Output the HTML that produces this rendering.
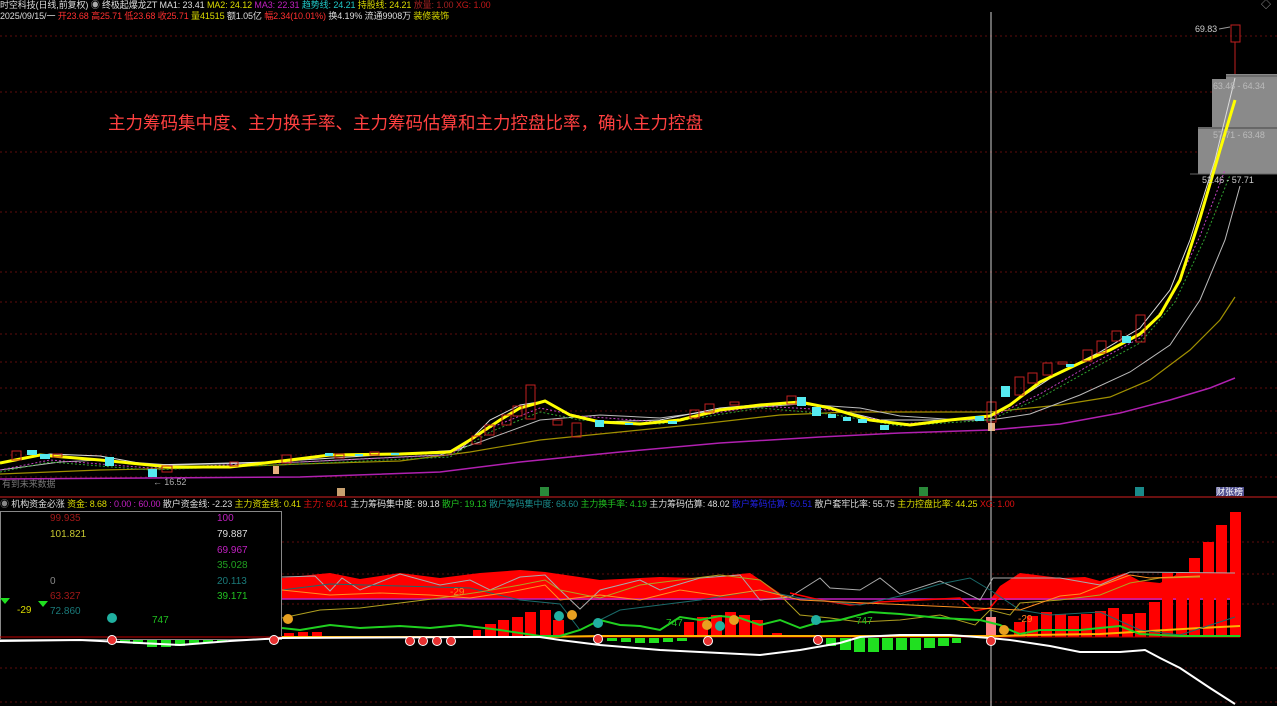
<!DOCTYPE html>
<html><head><meta charset="utf-8"><style>
html,body{margin:0;padding:0;background:#000;}
body{width:1277px;height:706px;overflow:hidden;position:relative;font-family:"Liberation Sans","Noto Sans CJK SC",sans-serif;}
.t{position:absolute;font-size:10px;white-space:nowrap;line-height:11px;}
.h{font-size:9px;letter-spacing:-0.1px;}
svg{position:absolute;left:0;top:0;}
</style></head><body>
<svg width="1277" height="706" viewBox="0 0 1277 706">
<g stroke="#5e0c0c" stroke-width="1" stroke-dasharray="2,3">
<line x1="0" y1="36" x2="1277" y2="36"/><line x1="0" y1="92" x2="1277" y2="92"/><line x1="0" y1="152" x2="1277" y2="152"/><line x1="0" y1="212" x2="1277" y2="212"/><line x1="0" y1="272" x2="1277" y2="272"/><line x1="0" y1="302" x2="1277" y2="302"/><line x1="0" y1="334" x2="1277" y2="334"/><line x1="0" y1="362" x2="1277" y2="362"/><line x1="0" y1="388" x2="1277" y2="388"/><line x1="0" y1="411" x2="1277" y2="411"/><line x1="0" y1="433" x2="1277" y2="433"/><line x1="0" y1="455" x2="1277" y2="455"/><line x1="0" y1="477" x2="1277" y2="477"/>
<line x1="282" y1="542" x2="1277" y2="542"/><line x1="282" y1="574" x2="1277" y2="574"/><line x1="282" y1="604" x2="1277" y2="604"/><line x1="0" y1="668" x2="1277" y2="668"/><line x1="0" y1="702" x2="1277" y2="702"/>
</g>
<line x1="0" y1="497" x2="1277" y2="497" stroke="#6a1010" stroke-width="2"/>
<rect x="1226" y="74" width="51" height="5" fill="#888"/>
<rect x="1212" y="79" width="65" height="48" fill="#8a8a8a"/>
<rect x="1198" y="127" width="79" height="47" fill="#8a8a8a"/>
<line x1="1226" y1="76" x2="1277" y2="76" stroke="#555"/>
<line x1="1198" y1="128" x2="1277" y2="128" stroke="#444"/>
<line x1="1190" y1="174" x2="1277" y2="174" stroke="#666"/>
<rect x="1231" y="25" width="9" height="17" fill="none" stroke="#c02020"/>
<line x1="1235" y1="42" x2="1235" y2="74" stroke="#c02020"/>
<line x1="1219" y1="29" x2="1230" y2="27" stroke="#999"/>
<polyline fill="none" stroke="#a09000" stroke-width="1.2" points="0,474 100,470 200,468 300,464 400,461 470,452 540,440 620,432 700,424 780,415 850,412 990,412 1060,405 1110,397 1150,380 1190,350 1220,320 1235,297"/>
<polyline fill="none" stroke="#b020b0" stroke-width="1.5" points="0,479 150,478 300,477 440,472 520,462 620,452 720,443 820,437 900,433 990,430 1060,424 1120,413 1170,400 1210,388 1235,378"/>
<polyline fill="none" stroke="#bbb" stroke-width="1" points="0,470 60,462 100,460 170,465 300,462 440,455 480,442 540,420 600,415 660,418 720,410 800,404 860,408 900,416 960,420 990,420 1030,414 1080,395 1130,372 1170,345 1200,300 1225,240 1240,186"/>
<polyline fill="none" stroke="#ddd" stroke-width="1" points="0,463 50,454 100,456 150,465 270,462 380,455 460,450 490,420 520,405 545,401 570,414 600,422 660,420 720,408 790,402 830,408 880,420 960,420 990,416 1020,398 1060,372 1100,352 1140,328 1170,290 1190,240 1215,160 1235,78"/>
<polyline fill="none" stroke="#c040c0" stroke-width="1" stroke-dasharray="2,2" points="0,470 50,460 150,468 300,462 450,455 490,428 540,408 580,416 660,422 760,406 830,410 900,424 990,418 1040,394 1090,365 1140,338 1170,300 1200,236 1225,170"/>
<polyline fill="none" stroke="#30a030" stroke-width="1" stroke-dasharray="2,2" points="0,472 50,462 150,470 300,464 450,457 490,432 540,412 580,420 660,424 760,408 830,414 900,426 990,420 1040,398 1090,370 1140,343 1175,302 1205,238 1230,175"/>
<polyline fill="none" stroke="#ffff00" stroke-width="3" points="0,463 40,455 100,460 170,467 230,467 290,460 330,455 400,454 450,452 470,440 500,420 520,408 545,401 570,415 600,422 640,424 680,420 720,410 760,405 800,402 830,408 870,420 910,425 950,420 990,416 1010,405 1040,382 1080,363 1110,350 1140,334 1160,315 1180,280 1200,218 1220,150 1235,100"/>
<g fill="none" stroke="#c02020" stroke-width="1">
<rect x="12" y="451" width="9" height="9"/><rect x="53" y="454" width="9" height="3"/><rect x="162" y="466" width="10" height="6"/><rect x="230" y="462" width="8" height="4"/><rect x="282" y="455" width="9" height="8"/><rect x="335" y="454" width="9" height="4"/><rect x="370" y="452" width="9" height="3"/><rect x="472" y="436" width="9" height="8"/><rect x="485" y="425" width="9" height="10"/><rect x="502" y="415" width="9" height="10"/><rect x="513" y="406" width="9" height="10"/><rect x="526" y="385" width="9" height="34"/><rect x="553" y="420" width="9" height="5"/><rect x="572" y="423" width="9" height="14"/><rect x="690" y="410" width="9" height="8"/><rect x="705" y="404" width="9" height="8"/><rect x="730" y="402" width="9" height="3"/><rect x="787" y="396" width="9" height="8"/>
<rect x="987" y="402" width="9" height="20"/><rect x="1015" y="377" width="9" height="18"/><rect x="1028" y="373" width="9" height="10"/><rect x="1043" y="363" width="9" height="12"/><rect x="1058" y="362" width="9" height="2"/><rect x="1083" y="350" width="9" height="11"/><rect x="1097" y="341" width="9" height="12"/><rect x="1112" y="331" width="9" height="10"/><rect x="1136" y="315" width="9" height="27"/>
</g>
<g fill="#55eaf0">
<rect x="27" y="450" width="10" height="5"/><rect x="40" y="454" width="10" height="5"/><rect x="105" y="457" width="9" height="9"/><rect x="148" y="469" width="9" height="8"/><rect x="325" y="453" width="8" height="3"/><rect x="355" y="454" width="8" height="2"/><rect x="391" y="453" width="8" height="2"/><rect x="595" y="420" width="9" height="7"/><rect x="625" y="423" width="8" height="2"/><rect x="668" y="421" width="9" height="3"/><rect x="797" y="397" width="9" height="9"/><rect x="812" y="407" width="9" height="9"/><rect x="828" y="414" width="8" height="4"/><rect x="843" y="417" width="8" height="4"/><rect x="858" y="419" width="9" height="4"/><rect x="880" y="425" width="9" height="5"/><rect x="975" y="416" width="9" height="5"/><rect x="1001" y="386" width="9" height="11"/><rect x="1066" y="364" width="8" height="3"/><rect x="1122" y="336" width="9" height="7"/>
</g>
<rect x="273" y="466" width="6" height="8" fill="#e8b080"/><rect x="988" y="423" width="7" height="8" fill="#e8b080"/>
<rect x="337" y="488" width="8" height="8" fill="#c8a070"/><rect x="540" y="487" width="9" height="9" fill="#2a8a3a"/><rect x="919" y="487" width="9" height="9" fill="#2a8a3a"/><rect x="1135" y="487" width="9" height="9" fill="#1a8a8a"/><rect x="1216" y="487" width="28" height="9" fill="#505090"/>
<line x1="991" y1="12" x2="991" y2="706" stroke="#cfcfcf" stroke-width="1"/>
<rect x="0.5" y="511.5" width="281" height="128" fill="none" stroke="#888"/>
<polygon fill="#ff0000" points="282,578 300,576 330,573 360,579 400,573 440,578 480,573 520,570 545,572 545,599 282,599"/>
<polygon fill="#ff0000" points="545,572 600,580 660,577 700,578 750,573 790,600 545,600"/>
<polygon fill="#ff0000" points="990,600 1000,586 1020,573 1060,578 1085,577 1100,581 1125,573 1140,581 1160,583 1180,573 1235,573 1235,600"/>
<line x1="282" y1="599" x2="1240" y2="599" stroke="#c020c0" stroke-width="1.5"/>
<g fill="#ff0000">
<rect x="473" y="630" width="8" height="7"/><rect x="485" y="624" width="11" height="13"/><rect x="498" y="620" width="11" height="17"/><rect x="512" y="617" width="11" height="20"/><rect x="525" y="612" width="11" height="25"/><rect x="540" y="610" width="11" height="27"/><rect x="553" y="620" width="11" height="17"/><rect x="684" y="622" width="10" height="15"/><rect x="697" y="617" width="11" height="20"/><rect x="711" y="615" width="11" height="22"/><rect x="725" y="612" width="11" height="25"/><rect x="739" y="615" width="11" height="22"/><rect x="752" y="620" width="11" height="17"/><rect x="772" y="633" width="10" height="4"/>
<rect x="1014" y="622" width="11" height="15"/><rect x="1027" y="616" width="11" height="21"/><rect x="1041" y="612" width="11" height="25"/><rect x="1055" y="614" width="11" height="23"/><rect x="1068" y="616" width="11" height="21"/><rect x="1081" y="614" width="11" height="23"/><rect x="1095" y="611" width="11" height="26"/><rect x="1108" y="608" width="11" height="29"/><rect x="1122" y="614" width="11" height="23"/><rect x="1135" y="613" width="11" height="24"/><rect x="1149" y="602" width="11" height="35"/><rect x="1162" y="573" width="11" height="64"/><rect x="1176" y="573" width="11" height="64"/><rect x="1189" y="558" width="11" height="79"/><rect x="1203" y="542" width="11" height="95"/><rect x="1216" y="525" width="11" height="112"/><rect x="1230" y="512" width="11" height="125"/>
<rect x="284" y="633" width="10" height="4"/><rect x="298" y="632" width="10" height="5"/><rect x="312" y="632" width="10" height="5"/>
</g>
<rect x="986" y="617" width="10" height="20" fill="#ff8080"/>
<g fill="#20e020">
<rect x="120" y="640" width="10" height="3"/><rect x="133" y="640" width="10" height="4"/><rect x="147" y="640" width="10" height="7"/><rect x="161" y="640" width="10" height="7"/><rect x="175" y="640" width="10" height="6"/><rect x="189" y="640" width="10" height="4"/><rect x="203" y="640" width="10" height="3"/><rect x="217" y="640" width="10" height="2"/>
<rect x="607" y="638" width="10" height="3"/><rect x="621" y="638" width="10" height="4"/><rect x="635" y="638" width="10" height="5"/><rect x="649" y="638" width="10" height="5"/><rect x="663" y="638" width="10" height="4"/><rect x="677" y="638" width="10" height="3"/>
<rect x="826" y="638" width="10" height="8"/><rect x="840" y="638" width="11" height="12"/><rect x="854" y="638" width="11" height="14"/><rect x="868" y="638" width="11" height="14"/><rect x="882" y="638" width="11" height="12"/><rect x="896" y="638" width="11" height="12"/><rect x="910" y="638" width="11" height="12"/><rect x="924" y="638" width="11" height="10"/><rect x="938" y="638" width="11" height="8"/><rect x="952" y="638" width="9" height="5"/>
</g>
<line x1="0" y1="637" x2="1240" y2="637" stroke="#c00000" stroke-width="1"/>
<polyline fill="none" stroke="#ffb000" stroke-width="2" points="282,637 540,637 600,636 1000,636 1030,635 1100,634 1200,628 1240,626"/>
<polyline fill="none" stroke="#aaa" stroke-width="1" points="282,577 315,576 330,591 342,578 360,590 400,574 440,585 470,580 490,590 520,577 545,575 560,590 580,609 600,590 640,580 660,590 700,578 740,575 760,600 790,597 820,578 830,588 860,590 880,578 900,594 940,581 960,590 980,600 993,578 1020,578 1060,578 1100,585 1130,572 1235,573"/>
<polyline fill="none" stroke="#ff0000" stroke-width="1.5" points="790,593 820,600 850,605 880,602 960,598 975,611 990,608 1000,596"/>
<polyline fill="none" stroke="#1a6a6a" stroke-width="1" points="282,590 330,584 400,586 470,588 520,600 560,604 580,630 620,610 700,600 760,590 800,598 860,605 900,596 940,584 970,578 990,590 1020,610 1050,615 1100,612 1140,630 1180,635 1235,617"/>
<polyline fill="none" stroke="#b0a020" stroke-width="1" points="282,618 320,610 360,608 400,603 440,598 480,592 520,585 545,580 560,590 600,598 640,585 680,580 720,575 760,580 780,595 800,615 830,618 860,622 900,620 940,615 975,625 990,610 1010,615 1020,603 1060,600 1100,595 1130,583 1160,578 1200,577"/>
<polyline fill="none" stroke="#ff9020" stroke-width="1" points="282,590 330,595 380,593 430,595 470,598 510,592 545,585 560,600 600,595 640,600 680,590 720,596 760,590 800,600 1020,610 1060,596 1080,594 1100,586 1130,575 1150,578 1200,576"/>
<polyline fill="none" stroke="#20d020" stroke-width="2" points="282,628 300,630 330,625 360,628 400,626 430,628 460,625 500,630 540,636 560,636 580,630 600,620 620,625 640,626 660,630 680,617 700,620 720,616 740,618 760,625 780,620 800,628 820,622 840,620 870,612 900,614 940,618 980,620 1000,625 1010,630 1020,634 1040,630 1080,630 1120,626 1140,634 1180,636 1240,636"/>
<polyline fill="none" stroke="#fff" stroke-width="2" points="0,641 80,640 120,642 180,645 230,641 282,638 470,637 540,637 560,640 600,645 660,650 700,652 760,655 800,650 840,643 860,637 900,635 950,635 990,638 1010,640 1050,646 1080,652 1120,652 1145,650 1160,658 1180,668 1210,688 1235,704"/>
<g fill="#e83030" stroke="#fff" stroke-width="1"><circle cx="112" cy="640" r="4.5"/><circle cx="274" cy="640" r="4.5"/><circle cx="410" cy="641" r="4.5"/><circle cx="423" cy="641" r="4.5"/><circle cx="437" cy="641" r="4.5"/><circle cx="451" cy="641" r="4.5"/><circle cx="598" cy="639" r="4.5"/><circle cx="708" cy="641" r="4.5"/><circle cx="818" cy="640" r="4.5"/><circle cx="991" cy="641" r="4.5"/></g>
<g fill="#e8a020"><circle cx="288" cy="619" r="5"/><circle cx="572" cy="615" r="5"/><circle cx="707" cy="625" r="5"/><circle cx="734" cy="620" r="5"/><circle cx="1004" cy="630" r="5"/></g>
<g fill="#20b0a0"><circle cx="112" cy="618" r="5"/><circle cx="559" cy="616" r="5"/><circle cx="598" cy="623" r="5"/><circle cx="720" cy="626" r="5"/><circle cx="816" cy="620" r="5"/></g>
<polygon points="0,598 10,598 5,604" fill="#20e020"/><polygon points="38,601 48,601 43,607" fill="#20e020"/>
</svg>
<div class="t h" style="left:0;top:0;color:#ddd">时空科技(日线,前复权) <span style="color:#aaa">◉</span> 终极起爆龙ZT MA1: 23.41 <span style="color:#dcdc00">MA2: 24.12</span> <span style="color:#c020c0">MA3: 22.31</span> <span style="color:#20c8c8">趋势线: 24.21</span> <span style="color:#dcdc00">持股线: 24.21</span> <span style="color:#a02020">放量: 1.00</span> <span style="color:#c01818">XG: 1.00</span></div>
<div class="t h" style="left:0;top:11px;color:#ddd">2025/09/15/一 <span style="color:#ff3030">开23.68 高25.71 低23.68 收25.71</span> <span style="color:#dcdc00">量41515</span> 额1.05亿 <span style="color:#ff3030">幅2.34(10.01%)</span> 换4.19% 流通9908万 <span style="color:#dcdc00">装修装饰</span></div>
<div style="position:absolute;left:108px;top:110px;font-size:17.5px;color:#ff4040;font-family:'Liberation Sans','Noto Sans CJK SC',sans-serif;white-space:nowrap">主力筹码集中度、主力换手率、主力筹码估算和主力控盘比率，确认主力控盘</div>
<div class="t h" style="left:1195px;top:24px;color:#ccc">69.83</div>
<div class="t h" style="left:1213px;top:81px;color:#bbb">63.48 - 64.34</div>
<div class="t h" style="left:1213px;top:130px;color:#bbb">57.71 - 63.48</div>
<div class="t h" style="left:1202px;top:175px;color:#ccc">52.46 - 57.71</div>
<div class="t" style="left:1261px;top:0;color:#aaa">◇</div>
<div class="t h" style="left:2px;top:479px;color:#777">有到未来数据</div>
<div class="t h" style="left:153px;top:477px;color:#aaa">← 16.52</div>
<div class="t" style="left:1216px;top:487px;color:#fff;font-size:9px">财张榜</div>
<div class="t h" style="left:0;top:499px;color:#ddd"><span style="color:#888">◉</span> 机构资金必涨 <span style="color:#dcdc00">资金: 8.68</span> <span style="color:#c020c0">: 0.00 : 60.00</span> 散户资金线: -2.23 <span style="color:#dcdc00">主力资金线: 0.41</span> <span style="color:#e01010">主力: 60.41</span> 主力筹码集中度: 89.18 <span style="color:#20c020">散户: 19.13</span> <span style="color:#1a8a8a">散户筹码集中度: 68.60</span> <span style="color:#20c020">主力换手率: 4.19</span> 主力筹码估算: 48.02 <span style="color:#2020e0">散户筹码估算: 60.51</span> 散户套牢比率: 55.75 <span style="color:#dcdc00">主力控盘比率: 44.25</span> <span style="color:#e01010">XG: 1.00</span></div>
<div class="t" style="left:50px;top:513px;color:#a01818">99.935</div>
<div class="t" style="left:50px;top:529px;color:#c8c830">101.821</div>
<div class="t" style="left:50px;top:576px;color:#888">0</div>
<div class="t" style="left:50px;top:591px;color:#a01818">63.327</div>
<div class="t" style="left:50px;top:606px;color:#1a7a7a">72.860</div>
<div class="t" style="left:17px;top:605px;color:#dcdc00">-29</div>
<div class="t" style="left:217px;top:513px;color:#c020c0">100</div>
<div class="t" style="left:217px;top:529px;color:#ddd">79.887</div>
<div class="t" style="left:217px;top:545px;color:#c020c0">69.967</div>
<div class="t" style="left:217px;top:560px;color:#20a020">35.028</div>
<div class="t" style="left:217px;top:576px;color:#1a7a7a">20.113</div>
<div class="t" style="left:217px;top:591px;color:#20c020">39.171</div>
<div class="t" style="left:152px;top:615px;color:#20c020">747</div>
<div class="t" style="left:666px;top:618px;color:#20c020">747</div>
<div class="t" style="left:856px;top:616px;color:#20c020">747</div>
<div class="t" style="left:450px;top:587px;color:#ff8020">-29</div>
<div class="t" style="left:1018px;top:614px;color:#ff8020">-29</div>
</body></html>
